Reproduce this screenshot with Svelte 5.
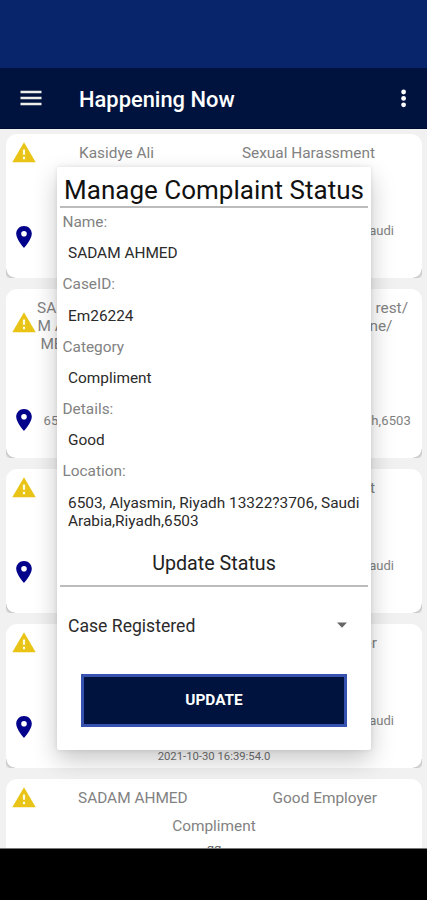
<script>
  const address = '6503, Alyasmin, Riyadh 13322?3706, Saudi';
  const cards = [
    { height: 144, warn: 8, pin: 92, left: ['Kasidye Ali'], lx: 73, right: ['Sexual Harassment'], rx: 47, address, ay: 89, ax: 28 },
    { height: 169, warn: 23, pin: 120, left: ['SADA', 'M AH', 'MED'], lx: 31, center: true, right: ['rest/', 'ne/'], rx: 14, address: '6503, Alyasmin, Riyadh 13322?3706, Saudi Arabia,Riyadh,6503', ay: 124, ax: 11, spacing: 0.13 },
    { height: 144, warn: 8, pin: 92, left: [], lx: 73, right: ['Compliment'], rx: 47, address, ay: 89, ax: 28 },
    { height: 144, warn: 8, pin: 92, left: [], lx: 73, right: ['Good Employer'], rx: 45, address, ay: 89, ax: 28, date: '2021-10-30 16:39:54.0' },
    { height: 144, warn: 8, left: ['SADAM AHMED'], lx: 72, right: ['Good Employer'], rx: 45, sub: 'Compliment', detail: 'gg' }
  ];
  const fields = [
    ['Name:', 'SADAM AHMED'],
    ['CaseID:', 'Em26224'],
    ['Category', 'Compliment'],
    ['Details:', 'Good'],
    ['Location:', '6503, Alyasmin, Riyadh 13322?3706, Saudi Arabia,Riyadh,6503']
  ];
</script>

<div class="screen">
  <div class="status"></div>
  <header>
    <svg class="menu" width="22" height="16" viewBox="0 0 22 16"><path d="M0.5 2H21.5M0.5 8H21.5M0.5 14H21.5" stroke="#eeeeea" stroke-width="2.3" /></svg>
    <h1>Happening Now</h1>
    <svg class="more" width="8" height="20" viewBox="0 0 8 20"><g fill="#fff"><circle cx="3.6" cy="4" r="2.4" /><circle cx="3.6" cy="10.4" r="2.4" /><circle cx="3.6" cy="16.8" r="2.4" /></g></svg>
  </header>
  <main>
    {#each cards as card}
      <article style="height:{card.height}px">
        <div class="icons">
          <svg style="margin-top:{card.warn}px" width="24" height="21" viewBox="0 0 24 21"><path d="M12 .2 23.7 20.2H.3Z" fill="#e9c416" /><path d="M12 7.5v5.3M12 14.8v2.4" stroke="#fffbe0" stroke-width="2.2" /></svg>
          {#if card.pin}
            <svg style="margin-top:{card.pin - card.warn - 21}px" width="16" height="22" viewBox="0 0 16 22"><path fill-rule="evenodd" d="M8 0C3.6 0 .2 3.4.2 7.8.2 13.4 8 22 8 22s7.8-8.6 7.8-14.2C15.8 3.4 12.4 0 8 0Zm0 5a2.8 2.8 0 1 1 0 5.6A2.8 2.8 0 0 1 8 5Z" fill="#02028a" /></svg>
          {/if}
        </div>
        <div class="info">
          <div class="top" style="padding-left:{Math.max(0, card.lx - 36)}px;padding-right:{card.rx}px">
            <div class:center={card.center}>{#each card.left as line}<p>{line}</p>{/each}</div>
            <div class="right" class:stagger={card.center}>{#each card.right as line}<p>{line}</p>{/each}</div>
          </div>
          {#if card.sub}<p class="sub">{card.sub}</p><p class="detail">{card.detail}</p>{/if}
          {#if card.address}
            <p class="address" style="margin-top:{card.ay - 10 - Math.max(card.left.length, card.right.length) * 18}px;padding-right:{card.ax}px;letter-spacing:{card.spacing ?? 0}px">{card.address}</p>
          {/if}
          {#if card.date}<p class="date">{card.date}</p>{/if}
        </div>
      </article>
    {/each}
  </main>
  <footer></footer>

  <section class="dialog">
    <h2>Manage Complaint Status</h2>
    <dl>
      {#each fields as [label, value]}
        <dt>{label}</dt>
        <dd>{value}</dd>
      {/each}
    </dl>
    <h3>Update Status</h3>
    <div class="select">
      <span>Case Registered</span>
      <svg width="12" height="7" viewBox="0 0 12 7"><path d="M1 .5h10L6 5.8Z" fill="#666" /></svg>
    </div>
    <button>UPDATE</button>
  </section>
</div>

<style>
  :global(body) { margin: 0; background: #000; }
  * { box-sizing: border-box; }
  p, h1, h2, h3, dl, dd { margin: 0; }
  svg { display: block; flex: none; }
  .screen {
    position: relative;
    display: flex;
    flex-direction: column;
    width: 427px;
    height: 900px;
    overflow: hidden;
    font-family: Roboto, "Liberation Sans", sans-serif;
  }
  .status { height: 68px; flex: none; background: #08246b; }
  header {
    display: flex;
    align-items: center;
    flex: none;
    height: 61px;
    padding: 0 19px 0 20px;
    background: #00133f;
    border-bottom: 1px solid #000b30;
  }
  h1 {
    margin: 3px 0 0 37px;
    font-size: 21.9px;
    line-height: 26px;
    font-weight: 500;
    color: #fff;
    white-space: nowrap;
  }
  .menu { margin-top: -1px; }
  .more { margin-left: auto; }
  main {
    display: flex;
    flex-direction: column;
    gap: 10.9px;
    flex: none;
    height: 719px;
    padding: 5px 5px 0 6px;
    overflow: hidden;
    background: #f1f1f1;
  }
  article {
    display: flex;
    flex: none;
    background:
      radial-gradient(circle at 100% 0, #fff 8px, #c6c6c6 9px, #f1f1f1 12px) 0 100% / 9px 9px no-repeat,
      radial-gradient(circle at 0 0, #fff 8px, #c6c6c6 9px, #f1f1f1 12px) 100% 100% / 9px 9px no-repeat,
      #fff;
    border-radius: 11px 11px 2px 2px;
  }
  .icons { display: flex; flex-direction: column; align-items: center; width: 36px; flex: none; }
  .info { flex: 1; min-width: 0; padding-top: 10px; color: #828282; }
  .top { display: flex; justify-content: space-between; font-size: 15.4px; line-height: 18px; white-space: nowrap; }
  .center { text-align: center; margin-left: -5px; }
  .center + .right { text-align: left; }
  .right { text-align: right; }
  .stagger p:last-child { margin-left: -6px; }
  .sub { margin-top: 10px; padding-right: 36px; text-align: center; font-size: 15.4px; line-height: 18px; }
  .detail { margin-top: 6px; padding-right: 36px; text-align: center; font-size: 13px; line-height: 16px; color: #606060; }
  .address { font-size: 13px; line-height: 16px; text-align: right; white-space: nowrap; }
  .date { margin-top: 20px; padding-right: 36px; text-align: center; font-size: 11.3px; line-height: 16px; color: #707070; }
  footer { height: 52px; flex: none; background: #000; border-top: 1px solid #777; }

  .dialog {
    position: absolute;
    left: 57px;
    top: 167px;
    width: 314px;
    height: 583px;
    padding: 0 3px;
    background: #fff;
    border-radius: 2px;
    box-shadow: 0 10px 24px rgba(0, 0, 0, .22), 0 0 4px rgba(0, 0, 0, .1);
    color: #222;
  }
  h2 {
    height: 41px;
    padding-top: 6px;
    border-bottom: 2px solid #bcbcbc;
    font-size: 26px;
    line-height: 34px;
    font-weight: 400;
    text-align: center;
    white-space: nowrap;
    color: #111;
  }
  dl { padding: 5.2px 0 0 2.5px; font-size: 15.4px; line-height: 18px; }
  dt { height: 18px; color: #828282; }
  dd { padding: 13.2px 0 13.1px 5.5px; color: #2b2b2b; }
  h3 {
    margin-top: 9.2px;
    height: 35px;
    border-bottom: 2px solid #bcbcbc;
    font-size: 19.7px;
    line-height: 24px;
    font-weight: 400;
    text-align: center;
    color: #222;
  }
  .select {
    display: flex;
    align-items: center;
    justify-content: space-between;
    margin-top: 27px;
    height: 24px;
    padding: 0 20px 0 8px;
    font-size: 17.6px;
    color: #2b2b2b;
  }
  button {
    display: block;
    width: 266px;
    height: 53px;
    margin: 36px 0 0 21px;
    padding: 0;
    border: 3px solid #3652ae;
    background: #00133f;
    color: #fff;
    font: 700 15.4px Roboto, sans-serif;
  }
</style>
